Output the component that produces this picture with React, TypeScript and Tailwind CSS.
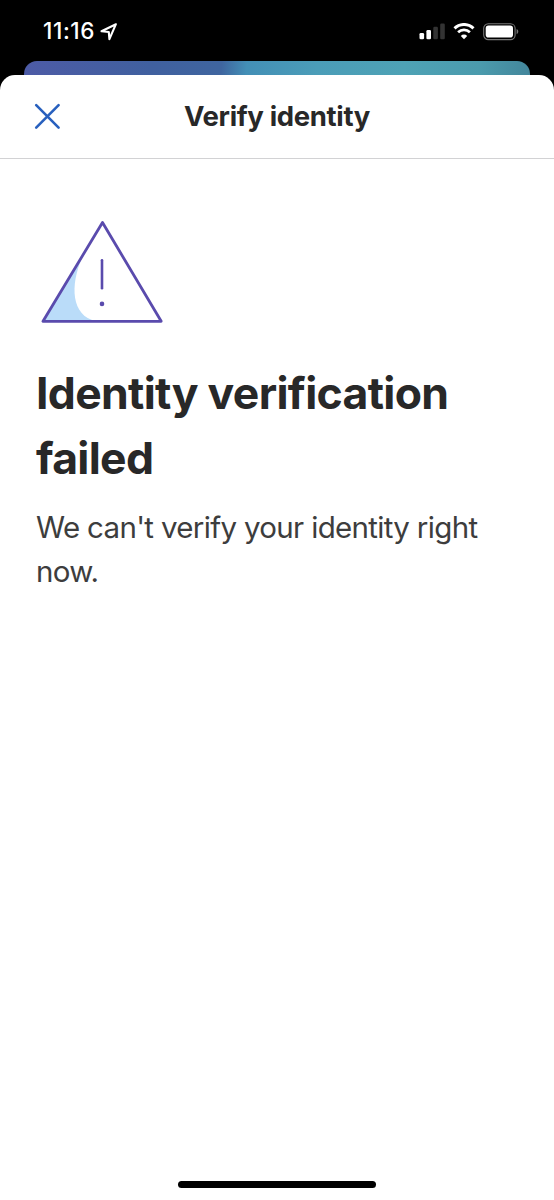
function StatusBar() {
  return (
    <div className="flex h-[61px] items-start justify-between pl-[43px] pr-[35px] text-white">
      <div className="flex items-start pt-[18px]">
        <span className="w-[57px] text-[22.5px] font-medium leading-[26px] tracking-[0.6px]">11:16</span>
        {/* Location arrow */}
        <svg className="mt-[4px]" width="18" height="19" viewBox="0 0 18 19" fill="none">
          <path d="M15.9 2.2 1.5 9.2l7.3.8.6 7.2Z" stroke="currentColor" strokeWidth="2.1" strokeLinejoin="round" />
        </svg>
      </div>

      <div className="flex pt-[23px]">
        <svg width="26" height="17" viewBox="0 0 26 17" fill="currentColor">
          <rect x="0.5" y="10" width="4.6" height="6.3" rx="1.3" />
          <rect x="7.4" y="7" width="4.6" height="9.3" rx="1.3" />
          <rect x="14.3" y="3.7" width="4.6" height="12.6" rx="1.3" fill="#333333" />
          <rect x="21.2" y="0.5" width="4.6" height="15.8" rx="1.3" fill="#333333" />
        </svg>
        <svg className="ml-[8px]" width="22" height="17" viewBox="0 0 22 17" fill="none">
          <path d="M1.5 5.3a13.7 13.7 0 0 1 19 0" stroke="currentColor" strokeWidth="3" />
          <path d="M5.1 9.2a8.5 8.5 0 0 1 11.8 0" stroke="currentColor" strokeWidth="2.7" />
          <path d="M11 16.2 7.8 12.9a4.6 4.6 0 0 1 6.4 0Z" fill="currentColor" />
        </svg>
        <svg className="ml-[8px]" width="36" height="18" viewBox="0 0 36 18" fill="none">
          <rect x="0.7" y="0.7" width="31.4" height="15.9" rx="4.6" stroke="#777777" strokeWidth="1.1" />
          <rect x="2.7" y="2.6" width="27.3" height="12" rx="2.8" fill="currentColor" />
          <path d="M33.6 6v5.2c1.1-.4 1.7-1.4 1.7-2.6s-.6-2.2-1.7-2.6Z" fill="#777777" />
        </svg>
      </div>
    </div>
  )
}

function WarningIllustration() {
  return (
    <svg width="132" height="112" viewBox="0 0 132 112" fill="none">
      <path d="M46 43C34 70 35 101 60 106H7Z" fill="#badcf9" />
      <path
        d="M66.5 7.5 7 106.3h118.2Z"
        stroke="#5a4bad"
        strokeWidth="2.8"
        strokeLinejoin="round"
      />
      <path d="M66 45.2v28" stroke="#5a4bad" strokeWidth="2.6" strokeLinecap="round" />
      <circle cx="66" cy="88.9" r="2.3" fill="#5a4bad" />
    </svg>
  )
}

export default function App() {
  return (
    <div className="flex h-[1200px] w-[554px] flex-col overflow-hidden bg-black font-['Inter',sans-serif]">
      <StatusBar />

      {/* Edge of the screen behind the sheet */}
      <div className="mx-6 h-[14px] shrink-0 rounded-t-[13px] bg-[linear-gradient(95deg,#4d5ba6_0%,#40609f_25%,#3f659f_39%,#438fb6_44%,#4b9db8_58%,#4ea2b5_75%,#4b9bad_90%,#43869b_100%)]" />

      <main className="flex flex-1 flex-col rounded-t-[15px] bg-white">
        <header className="grid h-[84px] grid-cols-[1fr_auto_1fr] items-center border-b border-[#d2d2d4] px-[34px]">
          <button aria-label="Close" className="w-[27px]">
            <svg width="27" height="27" viewBox="0 0 27 27" fill="none">
              <path d="m2.2 2.2 22.4 22.4m0-22.4L2.2 24.6" stroke="#2860be" strokeWidth="2.6" strokeLinecap="round" />
            </svg>
          </button>
          <h1 className="pb-[2px] text-[27.5px] font-bold leading-9 tracking-[-0.35px] text-[#282828]">Verify identity</h1>
        </header>

        <section className="flex-1 px-9 pt-[56px]">
          <WarningIllustration />
          <h2 className="mt-[34px] text-[44.5px] font-bold leading-[64.5px] tracking-[-0.68px] text-[#282828]">
            Identity verification failed
          </h2>
          <p className="mt-[15px] text-[29.5px] leading-[44px] tracking-[-0.67px] text-[#3d3d3d]">
            We can't verify your identity right now.
          </p>
        </section>

        {/* Home indicator */}
        <div className="mx-auto mb-[12px] h-[7px] w-[198px] rounded-full bg-black" />
      </main>
    </div>
  )
}
